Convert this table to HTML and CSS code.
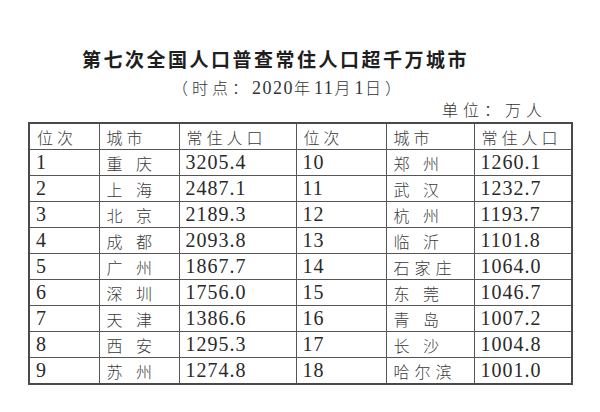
FILE: index.html
```html
<!DOCTYPE html>
<html lang="zh-CN">
<head>
<meta charset="utf-8">
<title>第七次全国人口普查常住人口超千万城市</title>
<link rel="stylesheet" href="styles.css">
</head>
<body>
<div class="page">
  <h1 class="title">第七次全国人口普查常住人口超千万城市</h1>
  <p class="subtitle">（时点：<span class="num">2020</span>年<span class="num">11</span>月<span class="num">1</span>日）</p>
  <p class="unit">单位：万人</p>
  <table class="data">
    <colgroup>
      <col class="c1"><col class="c2"><col class="c3"><col class="c4"><col class="c5"><col class="c6">
    </colgroup>
    <thead>
      <tr><th>位次</th><th>城市</th><th>常住人口</th><th>位次</th><th>城市</th><th>常住人口</th></tr>
    </thead>
    <tbody>
      <tr><td class="n">1</td><td class="city">重 庆</td><td class="n">3205.4</td><td class="n">10</td><td class="city">郑 州</td><td class="n">1260.1</td></tr>
      <tr><td class="n">2</td><td class="city">上 海</td><td class="n">2487.1</td><td class="n">11</td><td class="city">武 汉</td><td class="n">1232.7</td></tr>
      <tr><td class="n">3</td><td class="city">北 京</td><td class="n">2189.3</td><td class="n">12</td><td class="city">杭 州</td><td class="n">1193.7</td></tr>
      <tr><td class="n">4</td><td class="city">成 都</td><td class="n">2093.8</td><td class="n">13</td><td class="city">临 沂</td><td class="n">1101.8</td></tr>
      <tr><td class="n">5</td><td class="city">广 州</td><td class="n">1867.7</td><td class="n">14</td><td class="city">石家庄</td><td class="n">1064.0</td></tr>
      <tr><td class="n">6</td><td class="city">深 圳</td><td class="n">1756.0</td><td class="n">15</td><td class="city">东 莞</td><td class="n">1046.7</td></tr>
      <tr><td class="n">7</td><td class="city">天 津</td><td class="n">1386.6</td><td class="n">16</td><td class="city">青 岛</td><td class="n">1007.2</td></tr>
      <tr><td class="n">8</td><td class="city">西 安</td><td class="n">1295.3</td><td class="n">17</td><td class="city">长 沙</td><td class="n">1004.8</td></tr>
      <tr><td class="n">9</td><td class="city">苏 州</td><td class="n">1274.8</td><td class="n">18</td><td class="city">哈尔滨</td><td class="n">1001.0</td></tr>
    </tbody>
  </table>
</div>
</body>
</html>
```

FILE: styles.css
```css
html, body {
  margin: 0;
  padding: 0;
  background: #ffffff;
}

body {
  font-family: "Noto Sans CJK SC", "Noto Sans", sans-serif;
  color: #333333;
}

.page {
  width: 600px;
  height: 412px;
  padding-top: 47px;
  box-sizing: border-box;
  overflow: hidden;
}

.title {
  margin: 0;
  padding-left: 82px;
  font-size: 19px;
  line-height: 24px;
  font-weight: 700;
  letter-spacing: 2.5px;
  color: #1e1e1e;
}

.subtitle {
  margin: 6px 0 0;
  padding-left: 172px;
  font-size: 16px;
  line-height: 20px;
  font-weight: 300;
  letter-spacing: 4px;
  color: #333333;
}

.num {
  font-family: "Liberation Serif", serif;
  font-size: 18px;
  letter-spacing: 1.5px;
}

.unit {
  margin: 1px 0 0;
  padding-left: 442px;
  font-size: 16px;
  line-height: 20px;
  font-weight: 300;
  letter-spacing: 5px;
  color: #333333;
}

.data {
  margin: 3px 0 0 28px;
  border-collapse: collapse;
  table-layout: fixed;
  width: 545px;
  border: 2px solid #4a4a4a;
}

.c1 { width: 70px; }
.c2 { width: 80px; }
.c3 { width: 117px; }
.c4 { width: 90px; }
.c5 { width: 88px; }
.c6 { width: 98px; }

.data th,
.data td {
  border: 1px solid #555555;
  height: 25px;
  padding: 0 0 0 7px;
  text-align: left;
  vertical-align: middle;
  white-space: nowrap;
  overflow: hidden;
}

.data th {
  font-size: 16px;
  font-weight: 300;
  letter-spacing: 4px;
  color: #3a3a3a;
}

.data td.city {
  font-size: 16px;
  font-weight: 300;
  letter-spacing: 5px;
  color: #3a3a3a;
}

.data td.n {
  font-family: "Liberation Serif", serif;
  font-size: 20px;
  letter-spacing: 1px;
  color: #2a2a2a;
  padding-left: 6px;
}
```
